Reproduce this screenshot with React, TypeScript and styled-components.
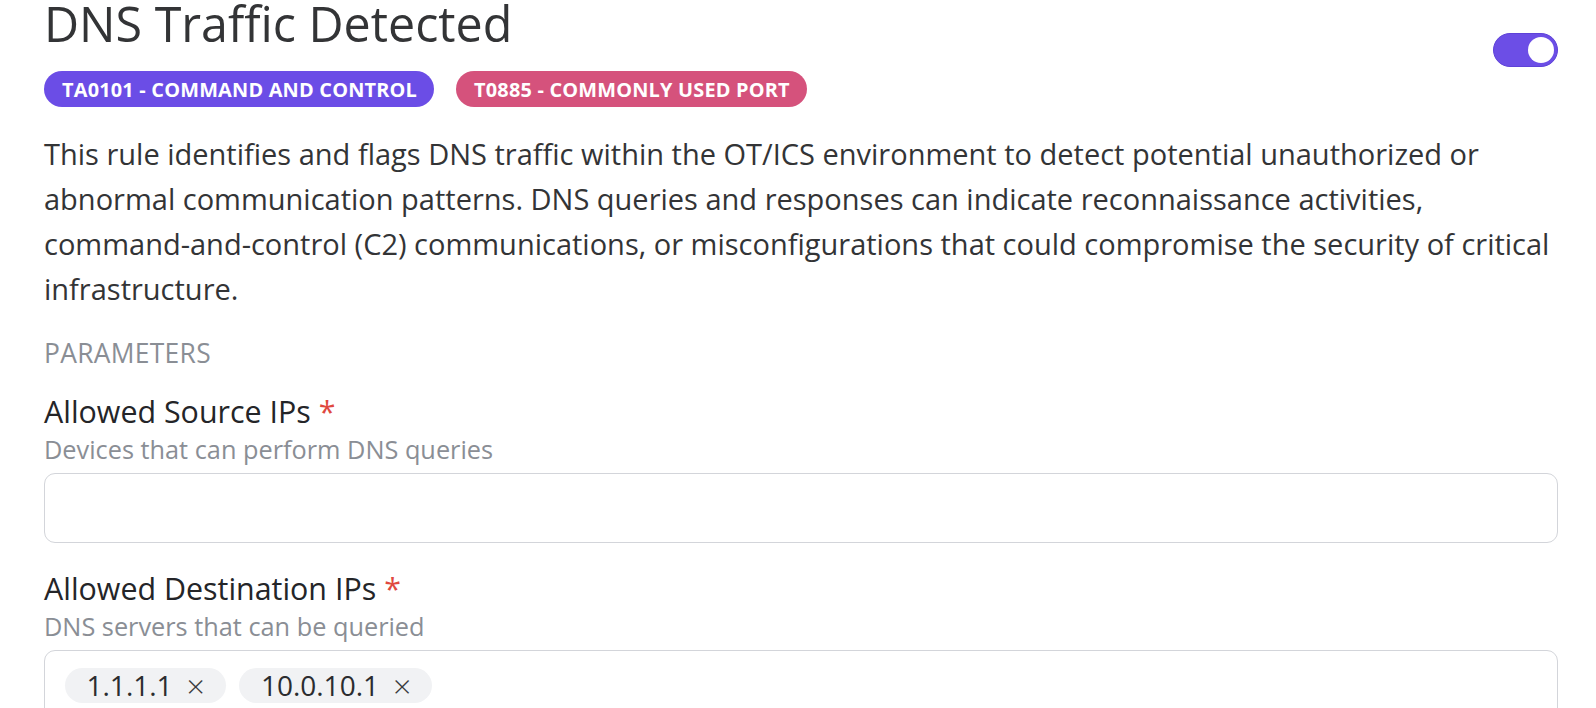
import styled, { createGlobalStyle } from "styled-components";

const GlobalStyle = createGlobalStyle`
  * {
    box-sizing: border-box;
  }
  body {
    margin: 0;
    background: #ffffff;
    font-family: "Open Sans", "Noto Sans", sans-serif;
    color: #2f3033;
  }
`;

const Page = styled.div`
  padding: 0 38px 0 44px;
  overflow: hidden;
  height: 708px;
`;

const Header = styled.header`
  display: flex;
  justify-content: space-between;
  align-items: flex-start;
`;

const HeaderText = styled.div`
  display: flex;
  flex-direction: column;
`;

const Title = styled.h1`
  margin: 0;
  font-size: 48.4px;
  font-weight: 400;
  line-height: 46px;
  color: #333436;
`;

const Tags = styled.div`
  display: flex;
  gap: 22px;
  margin-top: 25px;
`;

const Tag = styled.span<{ $color: string }>`
  display: inline-flex;
  align-items: center;
  height: 36px;
  padding: 0 17px 0 18px;
  border-radius: 18px;
  background: ${(props) => props.$color};
  color: #ffffff;
  font-size: 19.9px;
  font-weight: 700;
  letter-spacing: 0.2px;
`;

const Toggle = styled.button<{ $on: boolean }>`
  position: relative;
  width: 65px;
  height: 34px;
  margin-top: 33px;
  padding: 0;
  border: 1px solid ${(props) => (props.$on ? "#5e42d8" : "#c4c6cc")};
  border-radius: 17px;
  background: ${(props) => (props.$on ? "#6c4ee6" : "#d0d2d8")};
  cursor: pointer;
  &::after {
    content: "";
    position: absolute;
    top: 3px;
    left: ${(props) => (props.$on ? "34px" : "3px")};
    width: 26px;
    height: 26px;
    border-radius: 50%;
    background: #ffffff;
  }
`;

const Description = styled.p`
  margin: 24px 0 0;
  font-size: 29px;
  line-height: 45px;
  color: #333436;
`;

const SectionLabel = styled.div`
  margin-top: 27px;
  font-size: 26.4px;
  line-height: 30px;
  letter-spacing: 0.3px;
  color: #8a8e95;
`;

const Field = styled.div`
  margin-top: 25px;
  display: flex;
  flex-direction: column;
  & + & {
    margin-top: 27px;
  }
`;

const Label = styled.label`
  font-size: 30.4px;
  font-weight: 500;
  line-height: 38px;
  color: #242528;
`;

const Required = styled.span`
  margin-left: 8px;
  color: #e0483e;
`;

const Hint = styled.div`
  margin-top: 1px;
  font-size: 25.3px;
  line-height: 34px;
  color: #8a8e95;
`;

const InputBox = styled.div`
  display: flex;
  flex-wrap: wrap;
  gap: 13px;
  min-height: 70px;
  margin-top: 7px;
  padding: 16.5px 19.5px;
  border: 1.5px solid #d3d5da;
  border-radius: 11px;
  background: #ffffff;
`;

const Chip = styled.span`
  display: inline-flex;
  align-items: center;
  gap: 14px;
  height: 35px;
  padding: 0 21px 0 22px;
  border-radius: 18px;
  background: #f1f2f4;
  font-size: 28px;
  color: #2b2c2f;
`;

const ChipClose = styled.span`
  font-size: 32px;
  font-weight: 300;
  color: #3a3b3e;
`;

const chips = ["1.1.1.1", "10.0.10.1"];

export default function App() {
  return (
    <>
      <GlobalStyle />
      <Page>
        <Header>
          <HeaderText>
            <Title>DNS Traffic Detected</Title>
            <Tags>
              <Tag $color="#6b4de6">TA0101 - COMMAND AND CONTROL</Tag>
              <Tag $color="#d5527c">T0885 - COMMONLY USED PORT</Tag>
            </Tags>
          </HeaderText>
          <Toggle $on aria-label="Enabled" />
        </Header>
        <Description>
          This rule identifies and flags DNS traffic within the OT/ICS environment to detect
          potential unauthorized or abnormal communication patterns. DNS queries and responses
          can indicate reconnaissance activities, command-and-control (C2) communications, or
          misconfigurations that could compromise the security of critical infrastructure.
        </Description>
        <SectionLabel>PARAMETERS</SectionLabel>
        <Field>
          <Label>
            Allowed Source IPs<Required>*</Required>
          </Label>
          <Hint>Devices that can perform DNS queries</Hint>
          <InputBox />
        </Field>
        <Field>
          <Label>
            Allowed Destination IPs<Required>*</Required>
          </Label>
          <Hint>DNS servers that can be queried</Hint>
          <InputBox>
            {chips.map((ip) => (
              <Chip key={ip}>
                {ip}
                <ChipClose>×</ChipClose>
              </Chip>
            ))}
          </InputBox>
        </Field>
      </Page>
    </>
  );
}
